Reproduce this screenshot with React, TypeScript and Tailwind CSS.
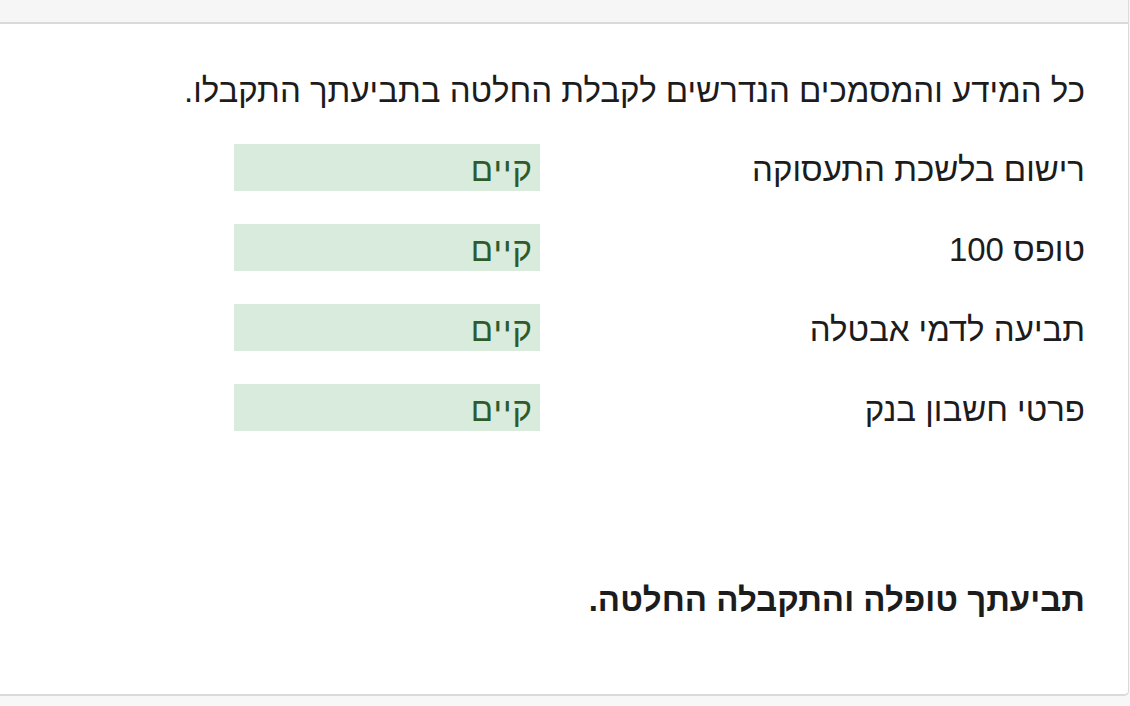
import React from "react";

const rows = ["רישום בלשכת התעסוקה", "טופס 100", "תביעה לדמי אבטלה", "פרטי חשבון בנק"];

export default function App() {
  return (
    <div className="w-[1130px] h-[706px] overflow-hidden bg-[#f7f7f7]" style={{ fontFamily: '"Liberation Sans", Arial, sans-serif' }}>
      <div className="h-[22px] mr-px border-r border-[#dcdcdc] bg-[#f6f6f6]" />
      <div
        dir="rtl"
        className="-ml-[10px] mr-px h-[674px] bg-white border-t-2 border-r border-b-2 border-[#dadada] rounded-br-[5px] pr-[43px] pt-[43px] text-[#1c1c1c]"
      >
        <p className="text-[33px] leading-[48px]">כל המידע והמסמכים הנדרשים לקבלת החלטה בתביעתך התקבלו.</p>
        <div className="mt-[29px] flex flex-col gap-[33px]">
          {rows.map((r) => (
            <div key={r} className="flex items-center h-[47px]">
              <div className="w-[545px] text-[33px] leading-[47px] pt-[4px]">{r}</div>
              <div className="w-[306px] h-[47px] bg-[#d9ebdc] text-[#2d5b2e] text-[33px] leading-[47px] pr-[7px] pt-[2px] tracking-[1px]">קיים</div>
            </div>
          ))}
        </div>
        <p className="mt-[145px] text-[33px] leading-[48px] font-bold">תביעתך טופלה והתקבלה החלטה.</p>
      </div>
    </div>
  );
}
